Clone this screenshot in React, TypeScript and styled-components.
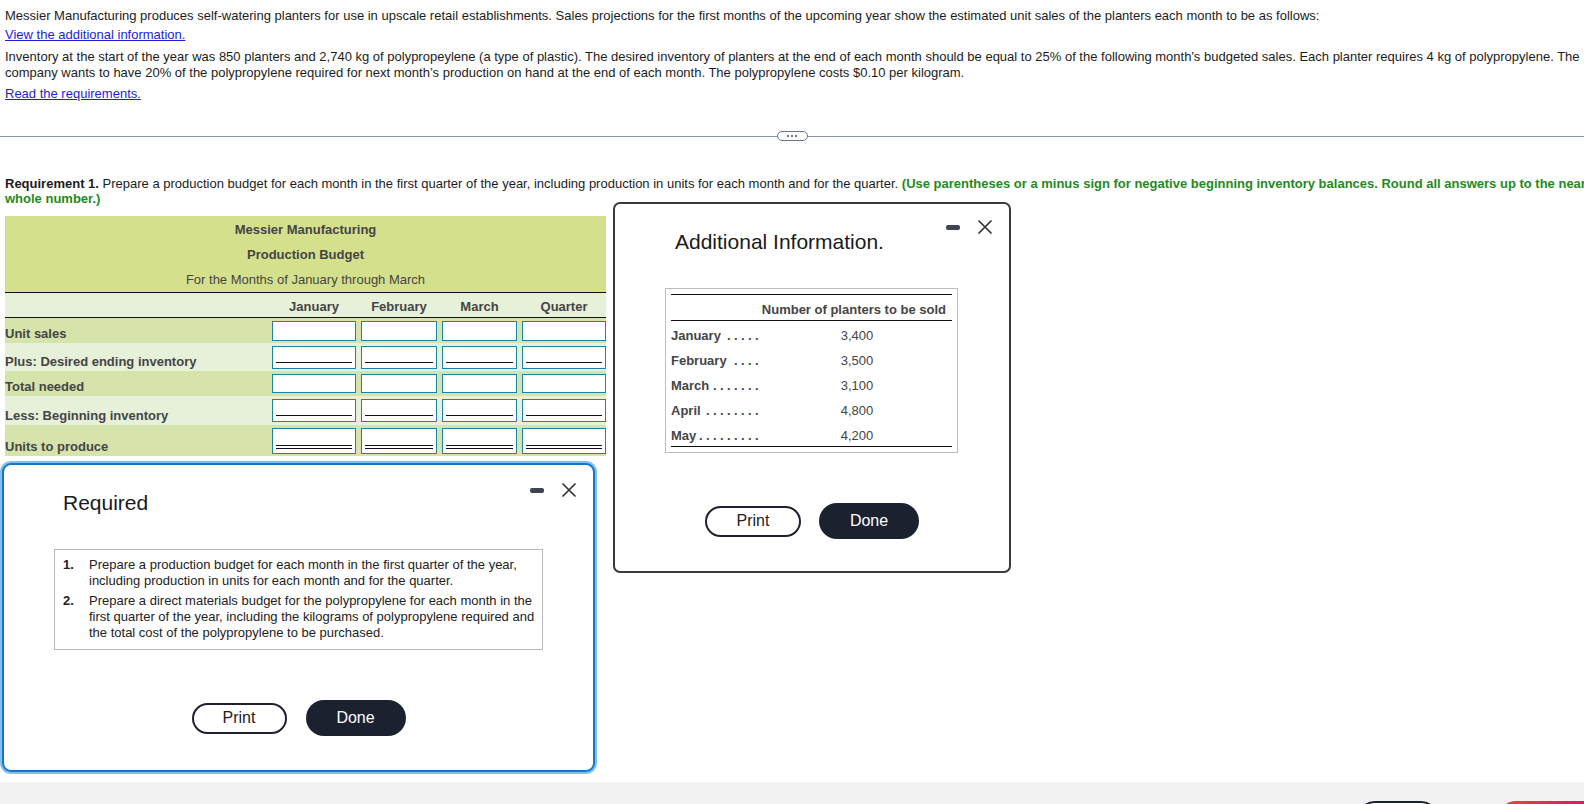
import React from "react";
import styled, { createGlobalStyle } from "styled-components";

const GlobalStyle = createGlobalStyle`
  *, *::before, *::after { box-sizing: border-box; }
  html, body { margin: 0; padding: 0; background: #ffffff; overflow: hidden; }
  body {
    font-family: "Liberation Sans", Arial, Helvetica, sans-serif;
    font-size: 13px;
    color: #1c1c1c;
  }
  button { font-family: inherit; cursor: pointer; }
`;

const Page = styled.div`
  width: 1584px;
  height: 804px;
  display: flex;
  flex-direction: column;
  overflow: hidden;
`;

const Workspace = styled.main`
  position: relative;
  flex: 0 0 782px;
  overflow: hidden;
`;

const Intro = styled.section`
  padding: 8px 0 0 5px;
  white-space: nowrap;
`;

const Para = styled.p<{ $gap: number; $lh: number }>`
  margin: ${({ $gap }) => $gap}px 0 0;
  line-height: ${({ $lh }) => $lh}px;
`;

const TextLink = styled.a`
  color: #1d1dd8;
  text-decoration: underline;
  cursor: pointer;
`;

const Divider = styled.div`
  margin-top: 30px;
  height: 10px;
  display: flex;
  align-items: center;
`;

const DividerLine = styled.span`
  flex: 1;
  height: 1px;
  background: #8a93a5;
`;

const ExpandHandle = styled.span`
  flex: none;
  width: 31px;
  height: 10px;
  border: 1px solid #66728a;
  border-radius: 5px;
  background: #fff;
  display: flex;
  align-items: center;
  justify-content: center;
  gap: 2px;
`;

const HandleDot = styled.span`
  width: 2px;
  height: 2px;
  border-radius: 50%;
  background: #3d4658;
`;

const Requirement = styled.p`
  margin: 35px 0 0;
  padding-left: 5px;
  line-height: 15px;
  white-space: nowrap;
`;

const Hint = styled.span`
  color: #1f8a22;
  font-weight: 700;
`;

const Budget = styled.div`
  margin: 10px 0 0 5px;
  width: 601px;
  color: #454545;
`;

const BudgetTitle = styled.div`
  background: #d5e08c;
  padding-top: 1px;
  border-bottom: 1px solid #111;
  text-align: center;
`;

const TitleLine = styled.div<{ $bold?: boolean }>`
  line-height: 25px;
  font-weight: ${({ $bold }) => ($bold ? 700 : 400)};
`;

const BudgetRow = styled.div<{ $h: number; $tone: "dark" | "light"; $ruled?: boolean }>`
  display: grid;
  grid-template-columns: 262px 84px 76px 75px 84px;
  column-gap: 5px;
  align-items: center;
  height: ${({ $h }) => $h}px;
  background: ${({ $tone }) => ($tone === "dark" ? "#d6e3aa" : "#e7f0d8")};
  border-bottom: ${({ $ruled }) => ($ruled ? "1px solid #111" : "none")};
`;

const ColHead = styled.div`
  align-self: end;
  padding-bottom: 2px;
  line-height: 16px;
  text-align: center;
  font-weight: 700;
`;

const RowLabel = styled.div`
  align-self: end;
  padding-bottom: 1px;
  line-height: 16px;
  font-weight: 700;
`;

const Field = styled.div<{ $h: number; $double?: boolean }>`
  height: ${({ $h }) => $h}px;
  background: #fff;
  border: 1px solid #1e82a0;
  display: flex;
  align-items: flex-end;
  padding: 0 3px ${({ $double }) => ($double ? 4 : 5)}px;
`;

const FieldRule = styled.span<{ $double?: boolean }>`
  flex: 1;
  height: ${({ $double }) => ($double ? 4 : 1)}px;
  border-top: 1px solid #111;
  border-bottom: ${({ $double }) => ($double ? "1px solid #111" : "none")};
`;

const Dialog = styled.section<{ $focused?: boolean }>`
  position: absolute;
  background: #fff;
  display: flex;
  flex-direction: column;
  border: 2px solid ${({ $focused }) => ($focused ? "#1677c6" : "#3a3a3a")};
  border-radius: ${({ $focused }) => ($focused ? 9 : 7)}px;
  box-shadow: ${({ $focused }) => ($focused ? "0 0 0 2px #84c0ee" : "none")};
`;

const RequiredDialog = styled(Dialog)`
  left: 2px;
  top: 463px;
  width: 593px;
  height: 309px;
`;

const InfoDialog = styled(Dialog)`
  left: 613px;
  top: 202px;
  width: 398px;
  height: 371px;
`;

const DialogHead = styled.header`
  display: flex;
  justify-content: space-between;
  align-items: flex-start;
`;

const DialogTitle = styled.h2<{ $left: number }>`
  margin: 0;
  padding: 26px 0 0 ${({ $left }) => $left}px;
  font-weight: 400;
  font-size: 21px;
  line-height: 24px;
  color: #1a1a1a;
`;

const WindowControls = styled.div<{ $top: number }>`
  display: flex;
  align-items: center;
  gap: 18px;
  padding: ${({ $top }) => $top}px 17px 0 0;
`;

const IconButton = styled.span`
  display: flex;
  align-items: center;
  justify-content: center;
`;

const RequiredBox = styled.ol`
  margin: 34px 0 0 50px;
  width: 489px;
  border: 1px solid #b8b8b8;
  padding: 7px 8px 8px;
  list-style: none;
  display: flex;
  flex-direction: column;
  gap: 4px;
  color: #222;
`;

const RequiredItem = styled.li`
  display: grid;
  grid-template-columns: 26px 1fr;
  line-height: 16px;
  white-space: nowrap;
`;

const ItemNum = styled.span`
  font-weight: 700;
`;

const ButtonRow = styled.div<{ $gap: number }>`
  display: flex;
  justify-content: center;
  align-items: center;
  gap: ${({ $gap }) => $gap}px;
  margin-top: 50px;
`;

const PrintButton = styled.button<{ $w: number }>`
  width: ${({ $w }) => $w}px;
  height: 31px;
  border: 2px solid #1c2130;
  border-radius: 16px;
  background: #fff;
  color: #222;
  font-size: 16px;
  padding: 0;
`;

const DoneButton = styled.button`
  width: 100px;
  height: 36px;
  border: 0;
  border-radius: 18px;
  background: #1c2130;
  color: #fff;
  font-size: 16px;
  padding: 0;
`;

const InfoBox = styled.div`
  margin: 34px 0 0 50px;
  width: 293px;
  border: 1px solid #bdbdbd;
  padding: 5px;
  color: #454545;
`;

const InfoTable = styled.div`
  border-top: 1px solid #111;
  border-bottom: 1px solid #111;
`;

const InfoRow = styled.div<{ $head?: boolean }>`
  display: grid;
  grid-template-columns: 91px 1fr;
  align-items: end;
  height: ${({ $head }) => ($head ? 26 : 25)}px;
  padding-bottom: 3px;
  line-height: 15px;
  border-bottom: ${({ $head }) => ($head ? "1px solid #111" : "none")};
`;

const InfoHeadCell = styled.div`
  grid-column: 1 / -1;
  justify-self: end;
  padding-right: 6px;
  font-weight: 700;
  white-space: nowrap;
`;

const InfoLabel = styled.div`
  display: flex;
  font-weight: 700;
  white-space: nowrap;
`;

const Leader = styled.span`
  margin-left: auto;
  letter-spacing: 3.4px;
`;

const InfoValue = styled.div`
  text-align: center;
`;

const Footer = styled.footer`
  flex: 1;
  background: #f2f2f2;
  display: flex;
  justify-content: flex-end;
  align-items: flex-start;
  gap: 59px;
  padding-top: 19px;
  overflow: hidden;
`;

const FooterGhost = styled.button`
  flex: none;
  width: 82px;
  height: 36px;
  border: 2px solid #1c2130;
  border-radius: 18px;
  background: #fff;
`;

const FooterPrimary = styled.button`
  flex: none;
  width: 112px;
  height: 36px;
  margin-right: -26px;
  border: 0;
  border-radius: 18px;
  background: linear-gradient(90deg, #e8473a 0%, #dc0a6c 100%);
`;

const MinimizeIcon = () => (
  <svg width="14" height="5" viewBox="0 0 14 5">
    <rect x="0" y="0" width="14" height="5" rx="2" fill="#3f4450" />
  </svg>
);

const CloseIcon = () => (
  <svg width="14" height="14" viewBox="0 0 14 14">
    <path d="M1 1 L13 13 M13 1 L1 13" stroke="#333" strokeWidth="1.7" strokeLinecap="round" />
  </svg>
);

type Rule = "none" | "single" | "double";

const rows: { label: string; h: number; field: number; tone: "dark" | "light"; rule: Rule }[] = [
  { label: "Unit sales", h: 25, field: 20, tone: "dark", rule: "none" },
  { label: "Plus: Desired ending inventory", h: 28, field: 23, tone: "light", rule: "single" },
  { label: "Total needed", h: 25, field: 19, tone: "dark", rule: "none" },
  { label: "Less: Beginning inventory", h: 29, field: 23, tone: "light", rule: "single" },
  { label: "Units to produce", h: 31, field: 26, tone: "dark", rule: "double" },
];

const months = ["January", "February", "March", "Quarter"];

const sales = [
  { m: "January", dots: ".....", v: "3,400" },
  { m: "February", dots: "....", v: "3,500" },
  { m: "March", dots: ".......", v: "3,100" },
  { m: "April", dots: "........", v: "4,800" },
  { m: "May", dots: ".........", v: "4,200" },
];

export default function App() {
  return (
    <>
      <GlobalStyle />
      <Page>
        <Workspace>
          <Intro>
            <Para $gap={0} $lh={15}>
              Messier Manufacturing produces self-watering planters for use in upscale retail establishments. Sales projections for the first months of the upcoming year show the estimated unit sales of the planters each month to be as follows:
            </Para>
            <Para $gap={4} $lh={15}>
              <TextLink>View the additional information.</TextLink>
            </Para>
            <Para $gap={7} $lh={16}>
              Inventory at the start of the year was 850 planters and 2,740 kg of polypropeylene (a type of plastic). The desired inventory of planters at the end of each month should be equal to 25% of the following month's budgeted sales. Each planter requires 4 kg of polypropylene. The
              <br />
              company wants to have 20% of the polypropylene required for next month’s production on hand at the end of each month. The polypropylene costs $0.10 per kilogram.
            </Para>
            <Para $gap={5} $lh={15}>
              <TextLink>Read the requirements.</TextLink>
            </Para>
          </Intro>

          <Divider>
            <DividerLine />
            <ExpandHandle>
              <HandleDot />
              <HandleDot />
              <HandleDot />
            </ExpandHandle>
            <DividerLine />
          </Divider>

          <Requirement>
            <b>Requirement 1.</b> Prepare a production budget for each month in the first quarter of the year, including production in units for each month and for the quarter.{" "}
            <Hint>
              (Use parentheses or a minus sign for negative beginning inventory balances. Round all answers up to the nearest
              <br />
              whole number.)
            </Hint>
          </Requirement>

          <Budget>
            <BudgetTitle>
              <TitleLine $bold>Messier Manufacturing</TitleLine>
              <TitleLine $bold>Production Budget</TitleLine>
              <TitleLine>For the Months of January through March</TitleLine>
            </BudgetTitle>
            <BudgetRow $h={25} $tone="light" $ruled>
              <span />
              {months.map((m) => (
                <ColHead key={m}>{m}</ColHead>
              ))}
            </BudgetRow>
            {rows.map((r) => (
              <BudgetRow key={r.label} $h={r.h} $tone={r.tone}>
                <RowLabel>{r.label}</RowLabel>
                {months.map((m) => (
                  <Field key={m} $h={r.field} $double={r.rule === "double"}>
                    {r.rule !== "none" && <FieldRule $double={r.rule === "double"} />}
                  </Field>
                ))}
              </BudgetRow>
            ))}
          </Budget>

          <InfoDialog>
            <DialogHead>
              <DialogTitle $left={60}>Additional Information.</DialogTitle>
              <WindowControls $top={16}>
                <IconButton>
                  <MinimizeIcon />
                </IconButton>
                <IconButton>
                  <CloseIcon />
                </IconButton>
              </WindowControls>
            </DialogHead>
            <InfoBox>
              <InfoTable>
                <InfoRow $head>
                  <InfoHeadCell>Number of planters to be sold</InfoHeadCell>
                </InfoRow>
                {sales.map((s) => (
                  <InfoRow key={s.m}>
                    <InfoLabel>
                      {s.m}
                      <Leader>{s.dots}</Leader>
                    </InfoLabel>
                    <InfoValue>{s.v}</InfoValue>
                  </InfoRow>
                ))}
              </InfoTable>
            </InfoBox>
            <ButtonRow $gap={18}>
              <PrintButton $w={96}>Print</PrintButton>
              <DoneButton>Done</DoneButton>
            </ButtonRow>
          </InfoDialog>

          <RequiredDialog $focused>
            <DialogHead>
              <DialogTitle $left={59}>Required</DialogTitle>
              <WindowControls $top={18}>
                <IconButton>
                  <MinimizeIcon />
                </IconButton>
                <IconButton>
                  <CloseIcon />
                </IconButton>
              </WindowControls>
            </DialogHead>
            <RequiredBox>
              <RequiredItem>
                <ItemNum>1.</ItemNum>
                <span>
                  Prepare a production budget for each month in the first quarter of the year,
                  <br />
                  including production in units for each month and for the quarter.
                </span>
              </RequiredItem>
              <RequiredItem>
                <ItemNum>2.</ItemNum>
                <span>
                  Prepare a direct materials budget for the polypropylene for each month in the
                  <br />
                  first quarter of the year, including the kilograms of polypropylene required and
                  <br />
                  the total cost of the polypropylene to be purchased.
                </span>
              </RequiredItem>
            </RequiredBox>
            <ButtonRow $gap={19}>
              <PrintButton $w={95}>Print</PrintButton>
              <DoneButton>Done</DoneButton>
            </ButtonRow>
          </RequiredDialog>
        </Workspace>
        <Footer>
          <FooterGhost aria-label="Clear all" />
          <FooterPrimary aria-label="Check answer" />
        </Footer>
      </Page>
    </>
  );
}
